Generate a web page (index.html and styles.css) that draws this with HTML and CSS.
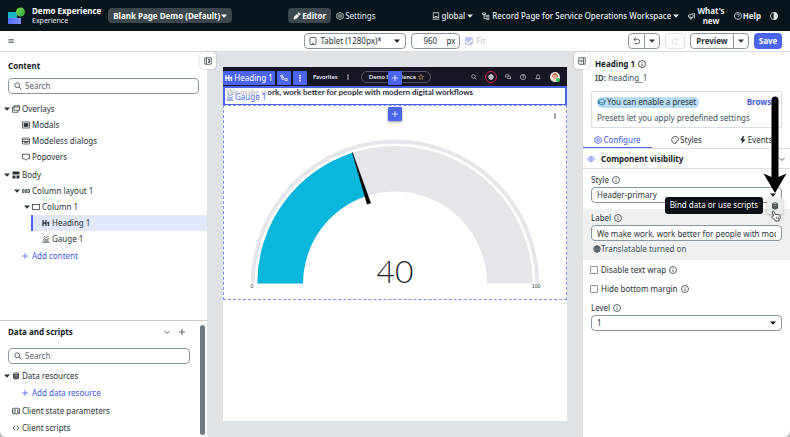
FILE: index.html
```html
<!DOCTYPE html>
<html lang="en">
<head>
  <meta charset="UTF-8" />
  <meta name="viewport" content="width=device-width, initial-scale=1.0" />
  <title>Demo Experience - Record Page</title>
  <link rel="stylesheet" href="styles.css">
</head>
<body>

  <!-- icon sprite -->
  <svg class="sprite" aria-hidden="true">
    <symbol id="i-caret" viewBox="0 0 10 10"><path d="M0 2.500h10L5 8z" fill="currentColor" stroke="none"/></symbol>
    <symbol id="i-plus" viewBox="0 0 16 16"><path d="M8 2v12M2 8h12"/></symbol>
    <symbol id="i-info" viewBox="0 0 16 16"><circle cx="8" cy="8" r="7"/><path d="M8 7v5M8 4v1.500"/></symbol>
    <symbol id="i-help" viewBox="0 0 16 16"><circle cx="8" cy="8" r="7"/><path d="M5.500 6.500a2.500 2.500 0 1 1 3.500 2.200q-1 .5-1 1.300M8 11.500V13"/></symbol>
    <symbol id="i-search" viewBox="0 0 16 16"><circle cx="6.500" cy="6.500" r="4.800"/><path d="M10 10l5 5"/></symbol>
    <symbol id="i-pencil" viewBox="0 0 16 16"><path d="M1 15l1-5 6-6 4 4-6 6zM9 3l2-2q1-.5 2 .5l1.500 1.500q1 1 0 2L13 7z" fill="currentColor" stroke="none"/></symbol>
    <symbol id="i-gear" viewBox="0 0 16 16"><path d="M6.500 1h3l.5 2 1.500 1 2.200-.5 1.300 2.500L13.500 8l1.500 2-1.300 2.500-2.200-.5-1.500 1-.5 2h-3L6 13l-1.500-1-2.200.5L1 10l1.500-2L1 6l1.300-2.500 2.200.5L6 3z"/><circle cx="8" cy="8" r="2.500"/></symbol>
    <symbol id="i-tablet" viewBox="0 0 16 16"><rect x="2" y="1" width="12" height="14" rx="2"/><path d="M6 12.500h4"/></symbol>
    <symbol id="i-scope" viewBox="0 0 16 16"><rect x="2.500" y="1.500" width="11" height="10"/><path d="M1 14.500h14M5 9h6"/></symbol>
    <symbol id="i-tree" viewBox="0 0 16 16"><path d="M1 2h6v3H1zM4 5v8h4M4 8h4M9 6.500h5v3H9zM9 12h5v3H9z"/></symbol>
    <symbol id="i-horn" viewBox="0 0 16 16"><path d="M1 6h3l6-3v8L4 10H1zM4 10v4h3v-3.500M13 2v11"/></symbol>
    <symbol id="i-contrast" viewBox="0 0 16 16"><circle cx="8" cy="8" r="7"/><path d="M8 1a7 7 0 0 1 0 14z" fill="currentColor"/></symbol>
    <symbol id="i-menu" viewBox="0 0 16 16"><path d="M1 4h14M1 8h14M1 12h14" stroke-width="2.500"/></symbol>
    <symbol id="i-undo" viewBox="0 0 16 16"><path d="M5 1L2 4.500 5 8M2 4.500h7a4.500 4.500 0 0 1 0 9H3"/></symbol>
    <symbol id="i-redo" viewBox="0 0 16 16"><path d="M11 1l3 3.500L11 8M14 4.500H7a4.500 4.500 0 0 0 0 9h6"/></symbol>
    <symbol id="i-panel-l" viewBox="0 0 16 16"><rect x="1.500" y="1.500" width="13" height="13" rx="1"/><path d="M5 2v12M8 5h4M8 8h3M8 11h4M11 6v4"/></symbol>
    <symbol id="i-panel-r" viewBox="0 0 16 16"><rect x="1.500" y="1.500" width="13" height="13" rx="1"/><path d="M11 2v12M3 8h5M6 5l3 3-3 3"/></symbol>
    <symbol id="i-overlays" viewBox="0 0 16 16"><path d="M4 1.500h11v9H4zM4 4.500H1v10h11v-4M4 4h11"/></symbol>
    <symbol id="i-modal" viewBox="0 0 16 16"><rect x="1" y="2" width="14" height="12"/><path d="M4 5h8v6H4z" fill="currentColor"/></symbol>
    <symbol id="i-modeless" viewBox="0 0 16 16"><rect x="1" y="2" width="14" height="12" rx="1"/><path d="M1 5.500h14M1 9h14M5 9v2h6V9"/></symbol>
    <symbol id="i-popover" viewBox="0 0 16 16"><path d="M1 2.500h14v9h-4l-3 3-3-3H1z"/></symbol>
    <symbol id="i-body" viewBox="0 0 16 16"><path d="M1 1h14v6H1zM1 9h6v6H1zM9 9h6v6H9z" fill="currentColor" stroke="none"/></symbol>
    <symbol id="i-columns" viewBox="0 0 16 16"><path d="M1 5h3v6H1zM6.500 5h3v6h-3zM12 5h3v6h-3z"/></symbol>
    <symbol id="i-column" viewBox="0 0 16 16"><rect x="1" y="3" width="14" height="10"/></symbol>
    <symbol id="i-h1" viewBox="0 0 16 16"><path d="M2 2v12M8 2v12M2 8h6M10.500 8.500L13 7v7" stroke-width="2.600"/></symbol>
    <symbol id="i-gauge" viewBox="0 0 16 16"><path d="M1 14.500h14M2 11l3-4 4 3 5-3M3 4l3-1 3 3 4-4M3 12h10"/></symbol>
    <symbol id="i-db" viewBox="0 0 16 16"><path d="M3 3.500v9q5 3.500 10 0v-9" fill="currentColor" fill-opacity=".45"/><ellipse cx="8" cy="3.500" rx="5" ry="2"/><path d="M3 7.500q5 3 10 0M3 10.500q5 3 10 0"/></symbol>
    <symbol id="i-params" viewBox="0 0 16 16"><rect x="1" y="2.500" width="14" height="11" rx="1"/><circle cx="5.500" cy="6.500" r="1.300"/><path d="M3 11q2.500-3 5 0M10 6h3M10 8.500h3M10 11h3"/></symbol>
    <symbol id="i-code" viewBox="0 0 16 16"><path d="M6 4L2 8l4 4M10 4l4 4-4 4"/></symbol>
    <symbol id="i-chevron" viewBox="0 0 16 16"><path d="M3 6l5 5 5-5"/></symbol>
    <symbol id="i-dots" viewBox="0 0 16 16"><path d="M7 2h2v2.500H7zM7 7h2v2.500H7zM7 12h2v2.500H7z" fill="currentColor" stroke-width="1"/></symbol>
    <symbol id="i-path" viewBox="0 0 16 16"><path d="M1.500 2.500h4v3h-4zM4 5.500v5h5M10 9h4.500v4H10zM5 5l4 4"/></symbol>
    <symbol id="i-star" viewBox="0 0 16 16"><path d="M8 1.500l2 4.500 5 .5-3.700 3.200 1.200 4.800L8 12l-4.500 2.500 1.200-4.800L1 6.500 6 6z"/></symbol>
    <symbol id="i-globe" viewBox="0 0 16 16"><circle cx="8" cy="8" r="6.500" fill="currentColor" fill-opacity=".4"/><path d="M1.500 8h13M8 1.500v13M3 4.500h10M3 11.500h10"/><ellipse cx="8" cy="8" rx="3" ry="6.500"/></symbol>
    <symbol id="i-chat" viewBox="0 0 16 16"><path d="M1 2h8v5.500H4L2.500 9V7.500H1zM11 6h4v6h-1.500v2L12 12H7V9.500"/></symbol>
    <symbol id="i-bell" viewBox="0 0 16 16"><path d="M2 12h12l-2-2.500V6a4 4 0 0 0-8 0v3.500zM6.500 14.500h3"/></symbol>
    <symbol id="i-cap" viewBox="0 0 16 16"><path d="M0 6l8-4 8 4-8 4z"/><path d="M3 8v4q5 3.500 10 0V8M1 6.500V12"/></symbol>
    <symbol id="i-palette" viewBox="0 0 16 16"><path d="M10 14.500a6.800 6.800 0 1 1 5-8q.5 3.500-3 3.500-3 0-2 4.500z"/><path d="M5 5v1M9 4v1M4.500 9v1"/></symbol>
    <symbol id="i-bolt" viewBox="0 0 16 16"><path d="M8 0L2 9h4v2l-1 5 8-9H9V5l1-5z" fill="currentColor" stroke="none"/></symbol>
    <symbol id="i-eye" viewBox="0 0 16 16"><path d="M1 8q7-10 14 0-7 10-14 0z"/><circle cx="8" cy="8" r="2.500"/></symbol>
  </svg>

  <div class="app">
    <header class="topbar">
      <div class="brand">
        <svg class="logo" viewBox="0 0 18 18" aria-hidden="true">
          <defs>
            <linearGradient id="gGreen" x1="0" y1="0" x2="1" y2="1"><stop offset="0" stop-color="#7bd94e"/><stop offset="1" stop-color="#28a745"/></linearGradient>
            <linearGradient id="gBlue"><stop offset="0" stop-color="#4f6bf5"/><stop offset="1" stop-color="#7f8dff"/></linearGradient>
          </defs>
          <path d="M0 5h9v7H0z" fill="#12b5c4"/>
          <path d="M0 11h13v6H0z" fill="url(#gBlue)"/>
          <circle cx="12.500" cy="5" r="4.500" fill="url(#gGreen)"/>
        </svg>
        <div class="brand-text">
          <h1>Demo Experience</h1>
          <p>Experience</p>
        </div>
        <button class="page-btn">Blank Page Demo (Default)<svg class="icon caret"><use href="#i-caret"/></svg></button>
      </div>
      <nav class="modes">
        <button class="mode active"><svg class="icon"><use href="#i-pencil"/></svg>Editor</button>
        <button class="mode"><svg class="icon"><use href="#i-gear"/></svg>Settings</button>
      </nav>
      <div class="top-right">
        <button class="top-item"><svg class="icon"><use href="#i-scope"/></svg>global<svg class="icon caret"><use href="#i-caret"/></svg></button>
        <button class="top-item"><svg class="icon"><use href="#i-tree"/></svg>Record Page for Service Operations Workspace<svg class="icon caret"><use href="#i-caret"/></svg></button>
        <button class="top-item strong"><svg class="icon"><use href="#i-horn"/></svg><span>What's<br>new</span></button>
        <button class="top-item strong"><svg class="icon"><use href="#i-help"/></svg>Help</button>
        <button class="top-item" aria-label="Contrast"><svg class="icon"><use href="#i-contrast"/></svg></button>
      </div>
    </header>

    <div class="toolbar">
      <button class="menu-btn" aria-label="Menu"><svg class="icon small"><use href="#i-menu"/></svg></button>
      <div class="viewport-tools">
        <div class="select device">
          <svg class="icon lead"><use href="#i-tablet"/></svg>
          <select aria-label="Device"><option>Tablet (1280px)*</option></select>
          <svg class="icon caret"><use href="#i-caret"/></svg>
        </div>
        <label class="width-box"><input type="text" value="960" aria-label="Width"> px</label>
        <label class="fit"><input type="checkbox" checked disabled> Fit</label>
      </div>
      <div class="actions">
        <div class="split">
          <button aria-label="Undo"><svg class="icon"><use href="#i-undo"/></svg></button>
          <button aria-label="Undo list"><svg class="icon caret"><use href="#i-caret"/></svg></button>
        </div>
        <button class="redo" disabled aria-label="Redo"><svg class="icon"><use href="#i-redo"/></svg></button>
        <div class="split">
          <button class="preview">Preview</button>
          <button aria-label="Preview options"><svg class="icon caret"><use href="#i-caret"/></svg></button>
        </div>
        <button class="save">Save</button>
      </div>
    </div>

    <main class="main">
      <aside class="left">
        <section class="content">
          <h2>Content</h2>
          <div class="search"><svg class="icon"><use href="#i-search"/></svg><input type="text" placeholder="Search" aria-label="Search content"></div>
          <ul class="tree">
            <li><svg class="icon caret"><use href="#i-caret"/></svg><svg class="icon"><use href="#i-overlays"/></svg>Overlays</li>
            <li class="l1"><svg class="icon"><use href="#i-modal"/></svg>Modals</li>
            <li class="l1"><svg class="icon"><use href="#i-modeless"/></svg>Modeless dialogs</li>
            <li class="l1"><svg class="icon"><use href="#i-popover"/></svg>Popovers</li>
          </ul>
          <ul class="tree">
            <li><svg class="icon caret"><use href="#i-caret"/></svg><svg class="icon"><use href="#i-body"/></svg>Body</li>
            <li class="l1"><svg class="icon caret"><use href="#i-caret"/></svg><svg class="icon"><use href="#i-columns"/></svg>Column layout 1</li>
            <li class="l2"><svg class="icon caret"><use href="#i-caret"/></svg><svg class="icon"><use href="#i-column"/></svg>Column 1</li>
            <li class="l3 selected"><svg class="icon"><use href="#i-h1"/></svg>Heading 1</li>
            <li class="l3"><svg class="icon"><use href="#i-gauge"/></svg>Gauge 1</li>
          </ul>
          <a class="add" href="#"><svg class="icon"><use href="#i-plus"/></svg>Add content</a>
        </section>
        <section class="data">
          <div class="data-head">
            <h2>Data and scripts</h2>
            <button aria-label="Collapse"><svg class="icon"><use href="#i-chevron"/></svg></button>
            <button aria-label="Add"><svg class="icon"><use href="#i-plus"/></svg></button>
          </div>
          <div class="search"><svg class="icon"><use href="#i-search"/></svg><input type="text" placeholder="Search" aria-label="Search data"></div>
          <ul class="tree">
            <li><svg class="icon caret"><use href="#i-caret"/></svg><svg class="icon"><use href="#i-db"/></svg>Data resources</li>
          </ul>
          <a class="add" href="#"><svg class="icon"><use href="#i-plus"/></svg>Add data resource</a>
          <ul class="tree flat">
            <li><svg class="icon"><use href="#i-params"/></svg>Client state parameters</li>
            <li><svg class="icon"><use href="#i-code"/></svg>Client scripts</li>
          </ul>
          <div class="scrollbar"></div>
        </section>
      </aside>

      <section class="stage">
        <button class="toggle toggle-left" aria-label="Collapse left panel"><svg class="icon"><use href="#i-panel-l"/></svg></button>
        <button class="toggle toggle-right" aria-label="Collapse right panel"><svg class="icon"><use href="#i-panel-r"/></svg></button>
        <div class="canvas">
          <div class="app-bar">
            <span class="fav">Favorites</span>
            <svg class="icon small"><use href="#i-dots"/></svg>
            <span class="app-pill">Demo Experience <svg class="icon small star"><use href="#i-star"/></svg></span>
            <span class="app-icons">
              <svg class="icon small"><use href="#i-search"/></svg>
              <span class="ring"><svg class="icon small"><use href="#i-globe"/></svg></span>
              <svg class="icon small"><use href="#i-chat"/></svg>
              <svg class="icon small"><use href="#i-help"/></svg>
              <svg class="icon small"><use href="#i-bell"/></svg>
              <svg class="avatar" viewBox="0 0 10 10"><circle cx="5" cy="5" r="5" fill="#f3e9e2"/><path d="M2 4q3-6 6 0v1H2z" fill="#b5573a"/><circle cx="5" cy="5" r="2.300" fill="#e9b08f"/><path d="M1.500 8.500q3.500-3 7 0-3.500 3-7 0z" fill="#e8d7cb"/><circle cx="8" cy="8" r="2" fill="#3fc15a"/></svg>
            </span>
          </div>
          <div class="heading-block">
            <h3>We make work, work better for people with modern digital workflows</h3>
            <span class="ghost"><svg class="icon"><use href="#i-gauge"/></svg>Gauge 1</span>
          </div>
          <div class="chips">
            <button class="chip name"><svg class="icon"><use href="#i-h1"/></svg>Heading 1</button>
            <button class="chip" aria-label="Select parent"><svg class="icon"><use href="#i-path"/></svg></button>
            <button class="chip" aria-label="More"><svg class="icon"><use href="#i-dots"/></svg></button>
          </div>
          <button class="chip insert before" aria-label="Add before"><svg class="icon"><use href="#i-plus"/></svg></button>
          <button class="chip insert after" aria-label="Add after"><svg class="icon"><use href="#i-plus"/></svg></button>
          <div class="gauge-block">
            <svg class="icon small more"><use href="#i-dots"/></svg>
            <svg class="gauge" viewBox="0 0 344 172">
              <path d="M29 158.500a143 143 0 0 1 286 0" fill="none" stroke="#e5e6ea" stroke-width="4"/>
              <path d="M56.500 158.500a115.500 115.500 0 0 1 231 0" fill="none" stroke="#e5e6ea" stroke-width="46"/>
              <path d="M33.500 158.500A138.500 138.500 0 0 1 129.200 26.800L143.400 70.500A92.500 92.500 0 0 0 79.500 158.500z" fill="#0ab7dc"/>
              <path d="M129 26.500l18.500 51-3.500 1.200z" fill="#000" stroke="#000" stroke-width=".5"/>
              <text x="172" y="158" class="value">40</text>
              <text x="28" y="163" class="tick">0</text>
              <text x="314" y="163" class="tick">100</text>
            </svg>
          </div>
        </div>
      </section>

      <aside class="right">
        <div class="info">
          <h2>Heading 1 <svg class="icon"><use href="#i-info"/></svg></h2>
          <p><b>ID:</b> heading_1</p>
        </div>
        <div class="preset">
          <div class="preset-row">
            <span class="pill"><svg class="icon"><use href="#i-cap"/></svg>You can enable a preset</span>
            <a href="#">Browse</a>
          </div>
          <p>Presets let you apply predefined settings</p>
        </div>
        <div class="tabs">
          <button class="tab active"><svg class="icon"><use href="#i-gear"/></svg>Configure</button>
          <button class="tab"><svg class="icon"><use href="#i-palette"/></svg>Styles</button>
          <button class="tab"><svg class="icon"><use href="#i-bolt"/></svg>Events</button>
        </div>
        <div class="visibility">
          <svg class="icon eye"><use href="#i-eye"/></svg>
          <h2>Component visibility</h2>
          <svg class="icon"><use href="#i-chevron"/></svg>
        </div>
        <div class="field">
          <label for="style">Style <svg class="icon"><use href="#i-info"/></svg></label>
          <div class="select">
            <select id="style"><option>Header-primary</option></select>
            <svg class="icon caret"><use href="#i-caret"/></svg>
          </div>
        </div>
        <div class="field shaded">
          <label for="label">Label <svg class="icon"><use href="#i-info"/></svg></label>
          <input id="label" type="text" value="We make work, work better for people with modern digital workflows">
          <p class="hint"><svg class="icon"><use href="#i-globe"/></svg>Translatable turned on</p>
          <div class="bind">
            <span class="tooltip">Bind data or use scripts</span>
            <button aria-label="Bind data"><svg class="icon"><use href="#i-db"/></svg></button>
          </div>
        </div>
        <label class="check"><input type="checkbox"> Disable text wrap <svg class="icon"><use href="#i-info"/></svg></label>
        <label class="check"><input type="checkbox"> Hide bottom margin <svg class="icon"><use href="#i-info"/></svg></label>
        <div class="field level">
          <label for="level">Level <svg class="icon"><use href="#i-info"/></svg></label>
          <div class="select">
            <select id="level"><option>1</option></select>
            <svg class="icon caret"><use href="#i-caret"/></svg>
          </div>
        </div>
        <svg class="arrow" viewBox="0 0 24 98" aria-hidden="true"><path d="M8.500 4q0-3.500 3.500-3.500t3.500 3.500v77l8-3.500L12 97 .5 77.500l8 3.500z"/></svg>
        <svg class="hand" viewBox="0 0 16 18" aria-hidden="true"><path d="M4 9L2 2.500q0-1.500 1.500-1.500L5 2l2 5 1-1 1.500 1 1-1L12 7l1-.5L14 8l1 4-2 2v3H7l-1-2-5-4 1-1.500z" fill="#fff" stroke="#222" stroke-width="1.300" stroke-linejoin="round"/><path d="M9 10l.5 4M11.500 10l.5 4" stroke="#222" fill="none"/></svg>
      </aside>
    </main>
  </div>

</body>
</html>
```

FILE: styles.css
```css
* {
  box-sizing: border-box;
}

body {
  margin: 0;
  background: #b9bcbd;
  font-family: "Noto Sans", "Open Sans", sans-serif;
  font-size: 8px;
  line-height: 12px;
  color: #2a3338;
}

h1, h2, h3, p, ul {
  margin: 0;
  padding: 0;
}

h2 {
  font-size: 8px;
  color: #11191d;
}

button, input, select {
  font: inherit;
  color: inherit;
  margin: 0;
}

button {
  display: flex;
  align-items: center;
  justify-content: center;
  padding: 0;
  border: none;
  background: none;
  cursor: pointer;
}

a {
  color: #3f57e0;
  text-decoration: none;
}

.sprite {
  position: absolute;
  width: 0;
  height: 0;
}

.icon {
  width: 8px;
  height: 8px;
  flex: none;
  fill: none;
  stroke: currentColor;
  stroke-width: 1.5;
}

.icon.caret {
  width: 6px;
  height: 6px;
}

.icon.small {
  width: 6px;
  height: 6px;
}

.app {
  display: flex;
  flex-direction: column;
  min-height: 100vh;
  background: #fff;
  border-radius: 0 0 6px 6px;
  overflow: hidden;
}

/* top bar */
.topbar {
  display: flex;
  align-items: center;
  justify-content: space-between;
  height: 31px;
  padding: 0 12px 0 8px;
  background: #07161d;
  color: #e8ecee;
}

.brand {
  display: flex;
  align-items: center;
}

.logo {
  width: 18px;
  height: 18px;
}

.brand-text {
  margin: 0 7px 0 6px;
}

.brand-text h1 {
  font-size: 8px;
  line-height: 10px;
  color: #fff;
}

.brand-text p {
  font-size: 7px;
  line-height: 10px;
}

.page-btn {
  height: 15px;
  padding: 0 5px;
  gap: 1px;
  border-radius: 4px;
  background: #3d484e;
  color: #fff;
  font-weight: bold;
}

.modes {
  display: flex;
  gap: 5px;
}

.mode {
  height: 15px;
  gap: 1px;
}

.mode.active {
  padding: 0 5px;
  border-radius: 4px;
  background: #3d484e;
  color: #fff;
  font-weight: bold;
}

.top-right {
  display: flex;
  align-items: center;
  gap: 9px;
}

.top-item {
  gap: 2px;
  font-weight: 500;
  line-height: 10px;
}

.top-item.strong {
  gap: 1px;
  font-weight: bold;
}

/* toolbar */
.toolbar {
  display: grid;
  grid-template-columns: 1fr auto 1fr;
  align-items: center;
  height: 21px;
  padding: 0 8px;
  border-bottom: 1px solid #dcdfe1;
}

.menu-btn {
  justify-self: start;
  color: #6b7479;
}

.viewport-tools, .actions {
  display: flex;
  align-items: center;
  gap: 5px;
}

.actions {
  justify-self: end;
}

.select {
  position: relative;
  display: flex;
}

.select select, .field > input {
  width: 100%;
  height: 16px;
  padding: 0 5px;
  border: 1px solid #8b979c;
  border-radius: 4px;
  background: #fff;
  appearance: none;
}

.select .caret {
  position: absolute;
  right: 6px;
  top: 5px;
  color: #11191d;
}

.select.device {
  width: 102px;
}

.device select {
  padding-left: 15px;
}

.lead {
  position: absolute;
  left: 5px;
  top: 4px;
}

.width-box {
  display: flex;
  align-items: center;
  width: 49px;
  height: 16px;
  padding-right: 5px;
  border: 1px solid #8b979c;
  border-radius: 4px;
}

.width-box input {
  width: 34px;
  padding: 0 0 0 11px;
  border: none;
  background: none;
}

.fit {
  display: flex;
  align-items: center;
  gap: 3px;
  color: #c3c8ca;
}

.fit input {
  width: 8px;
  height: 8px;
  appearance: none;
  border-radius: 2px;
  background: #bcc6f8;
  display: grid;
  place-items: center;
}

.fit input::before {
  content: "";
  width: 5px;
  height: 3px;
  border: solid #fff;
  border-width: 0 0 1px 1px;
  transform: rotate(-45deg);
}

.split {
  display: flex;
  height: 16px;
  border: 1px solid #8b979c;
  border-radius: 4px;
}

.split button {
  width: 15px;
}

.split button + button {
  border-left: 1px solid #8b979c;
}

.split .preview {
  width: 42px;
  font-weight: bold;
}

.redo {
  width: 20px;
  height: 16px;
  border: 1px solid #dfe2e3;
  border-radius: 4px;
  color: #cfd3d5;
}

.save {
  width: 28px;
  height: 16px;
  border-radius: 4px;
  background: #4a65ec;
  color: #fff;
  font-weight: bold;
}

/* layout */
.main {
  flex: 1;
  display: grid;
  grid-template-columns: 207px 1fr 207px;
}

.left {
  display: flex;
  flex-direction: column;
}

.content {
  flex: 1;
  padding-top: 8px;
}

.content h2 {
  padding-left: 8px;
}

.search {
  display: flex;
  align-items: center;
  gap: 3px;
  height: 16px;
  margin: 6px 8px 7px;
  padding: 0 5px;
  border: 1px solid #8b979c;
  border-radius: 4px;
}

.search input {
  flex: 1;
  min-width: 0;
  padding: 0;
  border: none;
  outline: none;
}

.search input::placeholder {
  color: #56636a;
}

.tree {
  list-style: none;
}

.tree + .tree {
  margin-top: 2px;
}

.tree li {
  display: flex;
  align-items: center;
  gap: 2px;
  height: 16px;
  padding-left: 4px;
}

.tree .l1 {
  padding-left: 22px;
}

.tree .l1:has(.caret) {
  padding-left: 14px;
}

.tree .l2 {
  padding-left: 24px;
}

.tree .l3 {
  margin-left: 31px;
  padding-left: 11px;
}

.tree .selected {
  padding-left: 9px;
  border-left: 2px solid #4a65ec;
  background: #e3e7fb;
}

.tree.flat li {
  height: 17px;
  padding-left: 12px;
}

.add {
  display: flex;
  align-items: center;
  gap: 3px;
  height: 18px;
  padding-left: 21px;
}

.data {
  position: relative;
  padding: 5px 17px 1px 0;
  border-top: 1px solid #c9cdd0;
}

.data-head {
  display: flex;
  align-items: center;
  gap: 7px;
  padding: 0 4px 0 8px;
}

.data-head h2 {
  flex: 1;
}

.data .search {
  margin: 10px 0 4px 8px;
}

.scrollbar {
  position: absolute;
  top: 4px;
  right: 2px;
  bottom: 2px;
  width: 5px;
  border-radius: 3px;
  background: #6d7a81;
}

/* stage */
.stage {
  position: relative;
  padding: 15px 16px 16px;
  background: #dfe3e6;
}

.toggle {
  position: absolute;
  top: 0;
  z-index: 2;
  width: 16px;
  height: 17px;
  border-radius: 4px;
  background: #fff;
  box-shadow: 0 0 2px rgba(0, 0, 0, 0.3);
}

.toggle-left {
  left: -7px;
}

.toggle-right {
  right: -7px;
}

.canvas {
  position: relative;
  height: 100%;
  background: #fff;
}

.app-bar {
  display: flex;
  align-items: center;
  height: 19px;
  padding: 0 7px 0 90px;
  background: #171625;
  color: #e6e6ec;
  font: bold 6px "Lato", sans-serif;
}

.fav {
  margin-right: 8px;
}

.app-pill {
  display: flex;
  align-items: center;
  justify-content: center;
  gap: 2px;
  width: 70px;
  height: 12px;
  margin-left: 10px;
  border: 1px solid #55546a;
  border-radius: 6px;
}

.star {
  color: #dca557;
}

.app-icons {
  display: flex;
  align-items: center;
  gap: 9px;
  margin-left: auto;
}

.app-icons .ring {
  display: grid;
  place-items: center;
  width: 12px;
  height: 12px;
  margin: 0 -1px;
  border: 1px solid #c92c48;
  border-radius: 50%;
}

.avatar {
  width: 10px;
  height: 10px;
}

.heading-block {
  position: relative;
  height: 19px;
  border: 2px solid #4a65ec;
  border-bottom-width: 1px;
}

.heading-block h3 {
  padding-left: 1px;
  font: bold 8px/8px "Lato", sans-serif;
  color: #2b2b3a;
}

.ghost {
  position: absolute;
  left: 0;
  top: 0;
  display: flex;
  align-items: flex-end;
  gap: 1px;
  height: 15px;
  padding: 0 2px 0 1px;
  background: rgba(255, 255, 255, 0.7);
  color: #4a65ec;
}

.ghost .icon {
  margin-bottom: 2px;
}

.chips {
  position: absolute;
  left: 0;
  top: 4px;
  display: flex;
  gap: 2px;
}

.chip {
  width: 14px;
  height: 14px;
  border-radius: 1px;
  background: #4a65ec;
  color: #fff;
}

.chip.name {
  width: 52px;
  gap: 1px;
}

.insert {
  position: absolute;
  left: calc(50% - 7px);
  box-shadow: 0 1px 3px rgba(0, 0, 0, 0.4);
}

.before {
  top: 4px;
}

.after {
  top: 40px;
}

.gauge-block {
  position: relative;
  padding: 20px 0 2px;
  border: 1px dashed #7f92f1;
}

.more {
  position: absolute;
  top: 7px;
  right: 8px;
}

.gauge {
  display: block;
  width: 100%;
}

.value {
  font: 300 32px "Lato", sans-serif;
  fill: #171b25;
  text-anchor: middle;
}

.tick {
  font: 5px "Lato", sans-serif;
  text-anchor: middle;
  fill: #333;
}

/* properties panel */
.right {
  position: relative;
  min-width: 0;
}

.info {
  padding: 6px 12px 7px;
}

.info h2, .field label {
  display: flex;
  align-items: center;
  gap: 3px;
}

.info p {
  margin-top: 2px;
}

.preset {
  height: 37px;
  margin: 0 8px;
  padding: 4px 5px;
  border: 1px solid #dcdfe1;
  border-radius: 2px;
}

.preset-row {
  display: flex;
  justify-content: space-between;
  align-items: center;
  margin-bottom: 4px;
}

.preset-row a {
  font-weight: bold;
}

.pill {
  display: flex;
  align-items: center;
  gap: 1px;
  height: 11px;
  padding: 0 3px 0 1px;
  border-radius: 5px;
  background: #b8dcf2;
}

.pill .icon {
  color: #17699a;
}

.preset p, .hint, .info p {
  color: #45535a;
}

.tabs {
  display: grid;
  grid-template-columns: 1fr 1fr 1fr;
  height: 21px;
  padding-top: 4px;
  border-bottom: 1px solid #dcdfe1;
}

.tab {
  gap: 1px;
  border-bottom: 1px solid transparent;
}

.tab.active {
  color: #3f57e0;
  border-color: #4a65ec;
}

.visibility {
  display: flex;
  align-items: center;
  gap: 6px;
  height: 20px;
  padding: 0 4px;
  border-bottom: 1px solid #dcdfe1;
}

.visibility h2 {
  flex: 1;
}

.eye {
  color: #4a65ec;
}

.field {
  padding: 5px 8px 6px;
}

.field .select, .field > input {
  margin-top: 1px;
}

.shaded {
  position: relative;
  padding: 3px 8px 5px;
  background: #eff1f1;
}

.hint {
  display: flex;
  align-items: center;
  margin: 2px 0 0 2px;
}

.bind {
  position: absolute;
  right: 7px;
  top: -12px;
  display: flex;
  align-items: center;
  gap: 4px;
}

.bind button {
  width: 16px;
  height: 16px;
  border-radius: 2px;
  background: #e9ecec;
  box-shadow: 0 1px 3px rgba(0, 0, 0, 0.3);
}

.tooltip {
  height: 17px;
  padding: 0 5px;
  border-radius: 3px;
  background: #0a1013;
  color: #fff;
  line-height: 16px;
  white-space: nowrap;
}

.check {
  display: flex;
  align-items: center;
  gap: 3px;
  height: 19px;
  padding: 0 7px;
}

.check input {
  width: 8px;
  height: 8px;
  border: 1px solid #8b979c;
  border-radius: 1px;
  appearance: none;
}

.level {
  padding-top: 4px;
}

.arrow {
  position: absolute;
  top: 44px;
  right: 3px;
  width: 24px;
  height: 98px;
}

.hand {
  position: absolute;
  top: 158px;
  right: 9px;
  width: 10px;
  height: 12px;
}
```
